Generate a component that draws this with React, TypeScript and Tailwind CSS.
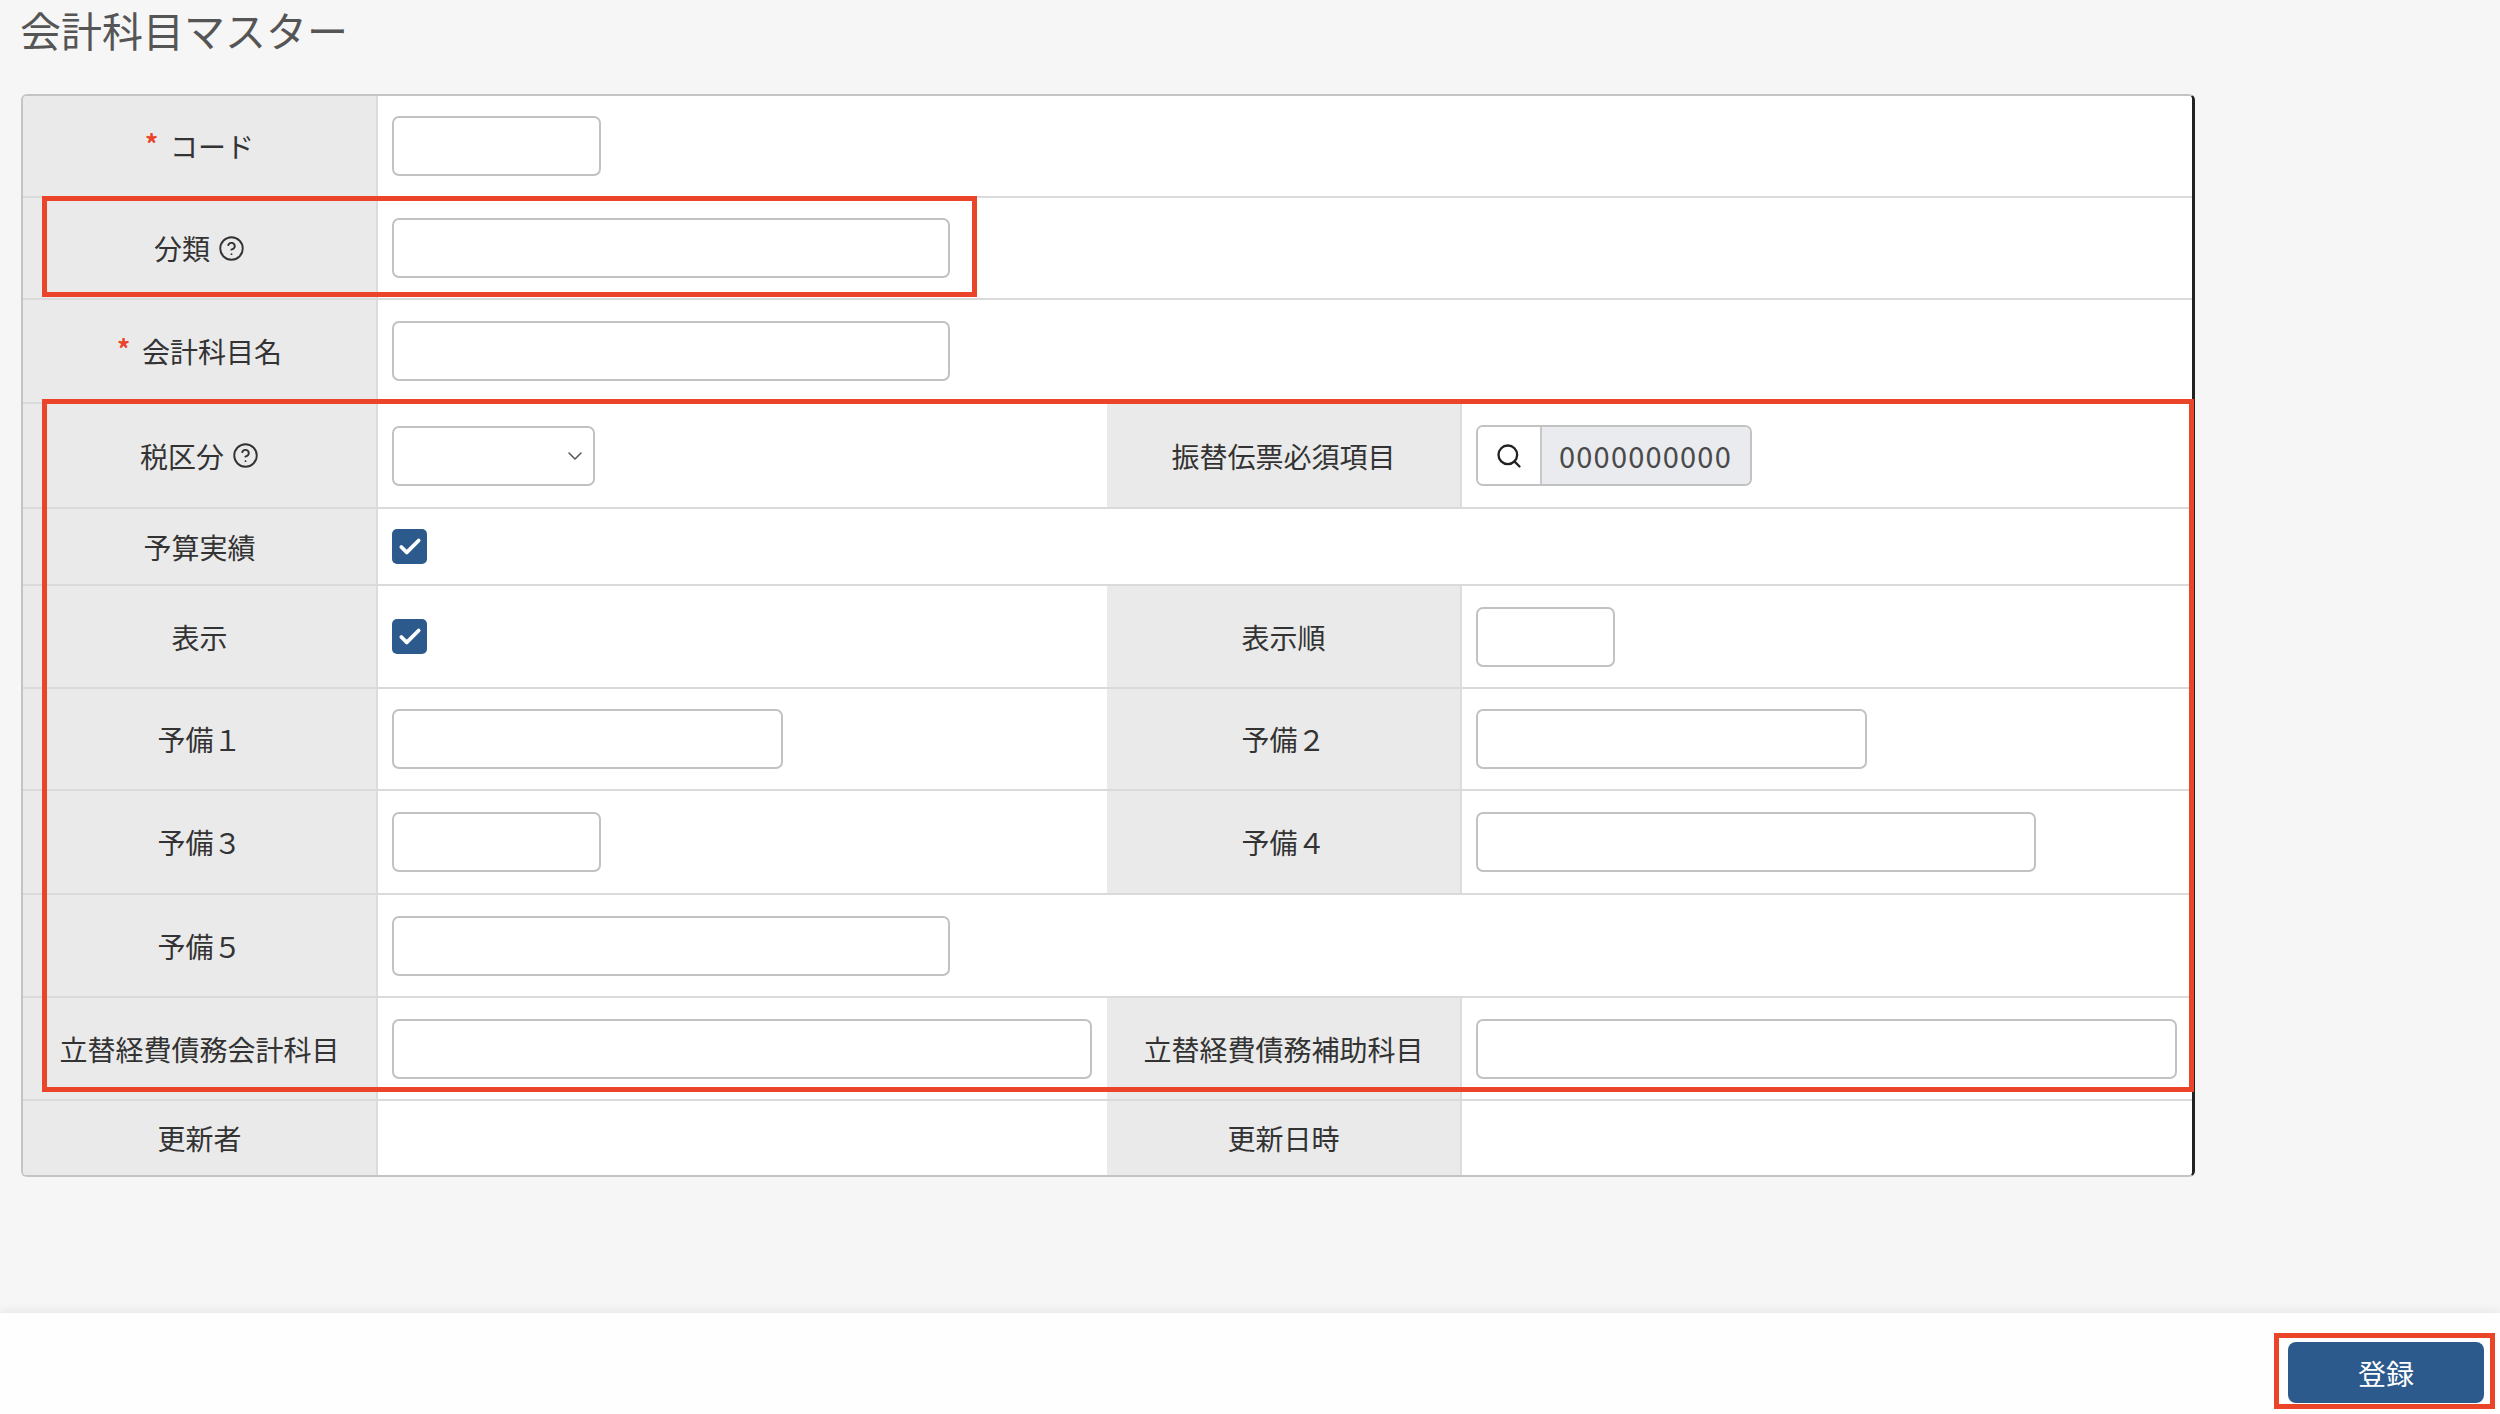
import { Check, ChevronDown, CircleHelp, Search } from 'lucide-react';
import type { ReactNode } from 'react';

const font = "font-['Noto_Sans_CJK_JP','Noto_Sans',sans-serif]";

function Label({ text, required, help }: { text: string; required?: boolean; help?: boolean }) {
  return (
    <div className="w-[355px] shrink-0 h-full flex items-center justify-center bg-[#eaeaea] border-r-2 border-[#dcdcdc] text-[28px] text-[#333]">
      {required && <span className="text-[26px] font-bold leading-none text-[#e8432b] mr-[12px] -mt-[6px]">*</span>}
      <span>{text}</span>
      {help && <CircleHelp size={27} strokeWidth={1.7} className="text-[#333] ml-[8px]" />}
    </div>
  );
}

function Field({ children, wide }: { children?: ReactNode; wide?: boolean }) {
  return (
    <div className={`${wide ? 'w-[729px] shrink-0' : 'flex-1'} h-full flex items-center pl-[14px] pr-[15px] bg-white`}>
      {children}
    </div>
  );
}

function TextInput({ w }: { w: string }) {
  return <div className={`${w} h-[60px] rounded-[7px] border-2 border-[#c2c2c2] bg-white`} />;
}

function Checkbox() {
  return (
    <div className="w-[35px] h-[35px] rounded-[5px] bg-[#2c5a8c] flex items-center justify-center">
      <Check size={26} strokeWidth={3.5} className="text-white" />
    </div>
  );
}

function Row({ children, h = 'h-[103px]', last }: { children: ReactNode; h?: string; last?: boolean }) {
  return <div className={`${h} flex ${last ? '' : 'border-b-2 border-[#dadada]'}`}>{children}</div>;
}

export default function App() {
  return (
    <div className={`${font} relative w-[2500px] h-[1414px] bg-[#f6f6f6] flex flex-col overflow-hidden`}>
      {/* Main */}
      <div className="flex-1">
        <h1 className="pl-[20px] text-[41px] leading-[58px] text-[#555] mb-[36px]">会計科目マスター</h1>

        <div className="ml-[21px] w-[2174px] bg-white border-2 border-[#c4c4c4] border-r-[3px] border-r-[#222] rounded-[6px] overflow-hidden">
          <Row h="h-[102px]">
            <Label text="コード" required />
            <Field><TextInput w="w-[209px]" /></Field>
          </Row>
          <Row h="h-[102px]">
            <Label text="分類" help />
            <Field><TextInput w="w-[558px]" /></Field>
          </Row>
          <Row h="h-[104px]">
            <Label text="会計科目名" required />
            <Field><TextInput w="w-[558px]" /></Field>
          </Row>
          <Row h="h-[105px]">
            <Label text="税区分" help />
            <Field wide>
              <div className="w-[203px] h-[60px] rounded-[7px] border-2 border-[#c2c2c2] bg-white flex items-center justify-end pr-[6px]">
                <ChevronDown size={24} strokeWidth={1.5} className="text-[#555]" />
              </div>
            </Field>
            <Label text="振替伝票必須項目" />
            <Field>
              <div className="h-[61px] flex rounded-[7px] border-2 border-[#c2c2c2] overflow-hidden">
                <div className="w-[64px] bg-white flex items-center justify-center border-r-2 border-[#c8c8c8]">
                  <Search size={28} strokeWidth={2} className="text-[#222]" />
                </div>
                <div className="bg-[#e9ebef] flex items-center pl-[17px] pr-[18px] text-[29px] tracking-[1.2px] text-[#4a4a4a]">0000000000</div>
              </div>
            </Field>
          </Row>
          <Row h="h-[77px]">
            <Label text="予算実績" />
            <Field><Checkbox /></Field>
          </Row>
          <Row>
            <Label text="表示" />
            <Field wide><Checkbox /></Field>
            <Label text="表示順" />
            <Field><TextInput w="w-[139px]" /></Field>
          </Row>
          <Row h="h-[102px]">
            <Label text="予備１" />
            <Field wide><TextInput w="w-[391px]" /></Field>
            <Label text="予備２" />
            <Field><TextInput w="w-[391px]" /></Field>
          </Row>
          <Row h="h-[104px]">
            <Label text="予備３" />
            <Field wide><TextInput w="w-[209px]" /></Field>
            <Label text="予備４" />
            <Field><TextInput w="w-[560px]" /></Field>
          </Row>
          <Row>
            <Label text="予備５" />
            <Field><TextInput w="w-[558px]" /></Field>
          </Row>
          <Row>
            <Label text="立替経費債務会計科目" />
            <Field wide><TextInput w="w-full" /></Field>
            <Label text="立替経費債務補助科目" />
            <Field><TextInput w="w-full" /></Field>
          </Row>
          <Row h="h-[74px]" last>
            <Label text="更新者" />
            <Field wide />
            <Label text="更新日時" />
            <Field />
          </Row>
        </div>
      </div>

      {/* Footer */}
      <div className="h-[101px] shrink-0 bg-[#fefefe] shadow-[0_-3px_8px_rgba(0,0,0,0.06)] flex justify-end items-start pt-[29px] pr-[16px]">
        <button className="w-[196px] h-[61px] rounded-[8px] bg-[#2c5a8c] text-white text-[28px]">登録</button>
      </div>

      {/* Annotation boxes */}
      <div className="absolute left-[42px] top-[196px] w-[935px] h-[101px] border-[5px] border-[#ea4429] pointer-events-none" />
      <div className="absolute left-[42px] top-[399px] w-[2152px] h-[693px] border-[5px] border-[#ea4429] pointer-events-none" />
      <div className="absolute left-[2274px] top-[1333px] w-[221px] h-[76px] border-[5px] border-[#ea4429] pointer-events-none" />
    </div>
  );
}
